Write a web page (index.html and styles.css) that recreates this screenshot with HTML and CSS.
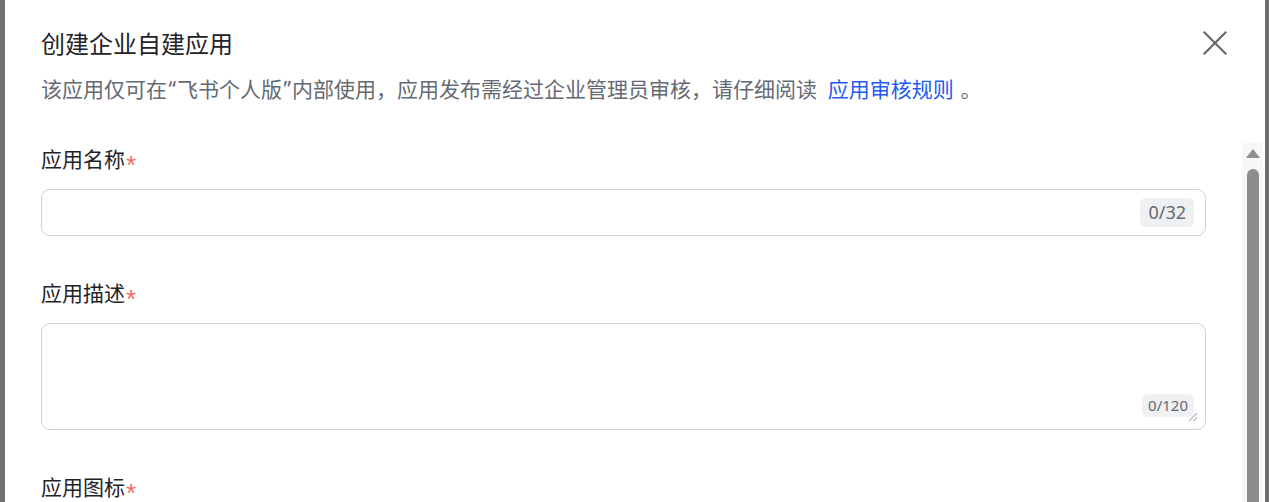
FILE: index.html
```html
<!DOCTYPE html>
<html lang="zh-CN">
<head>
  <meta charset="utf-8">
  <title>创建企业自建应用</title>
  <meta name="viewport" content="width=device-width, initial-scale=1">
  <link rel="stylesheet" href="styles.css">
</head>
<body>
  <div class="modal">
    <header class="modal-header">
      <div class="title-row">
        <h2 class="modal-title">创建企业自建应用</h2>
        <button class="close" type="button" aria-label="关闭">
          <svg width="24" height="24" viewBox="0 0 24 24" fill="none" stroke="currentColor" stroke-width="2.2" stroke-linecap="square">
            <path d="M1.5 1.5L22.5 22.5M22.5 1.5L1.5 22.5"/>
          </svg>
        </button>
      </div>
      <p class="modal-desc">该应用仅可在<span class="quote">“</span>飞书个人版<span class="quote">”</span>内部使用，应用发布需经过企业管理员审核，请仔细阅读 <a href="#">应用审核规则</a> 。</p>
    </header>

    <div class="modal-body">
      <form class="form">
        <div class="field">
          <label class="label">应用名称<span class="required">*</span></label>
          <div class="input-wrap">
            <input type="text">
            <span class="count">0/32</span>
          </div>
        </div>

        <div class="field">
          <label class="label">应用描述<span class="required">*</span></label>
          <div class="textarea-wrap">
            <textarea></textarea>
            <span class="count count-small">0/120</span>
            <svg class="grip" width="10" height="10" viewBox="0 0 10 10" stroke="#b8bcc2" stroke-width="1.2">
              <path d="M9 1L1 9M9 5.5L5.5 9"/>
            </svg>
          </div>
        </div>

        <div class="field">
          <label class="label">应用图标<span class="required">*</span></label>
        </div>
      </form>

      <div class="scrollbar">
        <span class="scroll-arrow"></span>
        <span class="scroll-thumb"></span>
      </div>
    </div>
  </div>
</body>
</html>
```

FILE: styles.css
```css
*, *::before, *::after {
  margin: 0;
  padding: 0;
  box-sizing: border-box;
}

html, body {
  height: 100%;
}

body {
  display: flex;
  padding: 0 4px 0 5px;
  overflow: hidden;
  background-color: #6f6f6f;
  color: #1f2329;
  font-family: "Noto Sans CJK SC", "Noto Sans", sans-serif;
}

.modal {
  flex: 1;
  display: flex;
  flex-direction: column;
  height: 620px;
  background-color: #FFFFFF;
}

.modal-header {
  padding: 27px 38px 39px 36px;
}

.title-row {
  display: flex;
  align-items: center;
  justify-content: space-between;
}

.modal-title {
  font-size: 24px;
  line-height: 32px;
  font-weight: 400;
}

.close {
  display: flex;
  width: 24px;
  height: 24px;
  border: none;
  background: none;
  color: #646a73;
  cursor: pointer;
}

.modal-desc {
  margin-top: 14px;
  font-size: 21px;
  line-height: 30px;
  color: #646a73;
}

.quote {
  padding: 0 1px 0 1.5px;
  font-family: "Noto Sans", sans-serif;
}

.modal-desc a {
  margin: 0 2px 0 6px;
  color: #1f5cf0;
  text-decoration: none;
}

.modal-body {
  flex: 1;
  display: flex;
  min-height: 0;
}

.form {
  flex: 1;
  padding: 0 36px;
}

.field {
  margin-bottom: 41px;
}

.label {
  display: block;
  height: 30px;
  margin-bottom: 16px;
  font-size: 21px;
  line-height: 30px;
}

.required {
  position: relative;
  top: 7px;
  margin-left: 1px;
  color: #f76964;
  font-family: "Liberation Sans", sans-serif;
  font-size: 26px;
  line-height: 0;
}

.input-wrap {
  display: flex;
  align-items: center;
  height: 47px;
  padding: 0 11px 0 16px;
  border: 1px solid #d0d3d6;
  border-radius: 9px;
}

.input-wrap input {
  flex: 1;
  border: none;
  outline: none;
  background: none;
  font: inherit;
  font-size: 21px;
  color: #1f2329;
}

.count {
  padding: 0 8px;
  border-radius: 6px;
  background-color: #eff0f1;
  color: #646a73;
  font-family: "Noto Sans", sans-serif;
  font-size: 18px;
  line-height: 29px;
}

.textarea-wrap {
  position: relative;
}

.textarea-wrap textarea {
  display: block;
  width: 100%;
  height: 107px;
  padding: 10px 16px;
  border: 1px solid #d0d3d6;
  border-radius: 9px;
  outline: none;
  font: inherit;
  font-size: 21px;
  color: #1f2329;
  resize: none;
}

.count-small {
  position: absolute;
  right: 12px;
  bottom: 13px;
  padding: 0 6px;
  font-size: 15px;
  line-height: 23px;
}

.grip {
  position: absolute;
  right: 8px;
  bottom: 8px;
}

/* static scrollbar of the form area */
.scrollbar {
  display: flex;
  flex-direction: column;
  align-items: center;
  width: 21px;
  margin-right: 2px;
  background-color: #f7f7f7;
}

.scroll-arrow {
  margin-top: 6px;
  width: 0;
  height: 0;
  border-left: 7px solid transparent;
  border-right: 7px solid transparent;
  border-bottom: 9px solid #8f8f8f;
}

.scroll-thumb {
  flex: 1;
  width: 12px;
  margin-top: 11px;
  border-radius: 6px 6px 0 0;
  background-color: #8c8c8c;
}
```
